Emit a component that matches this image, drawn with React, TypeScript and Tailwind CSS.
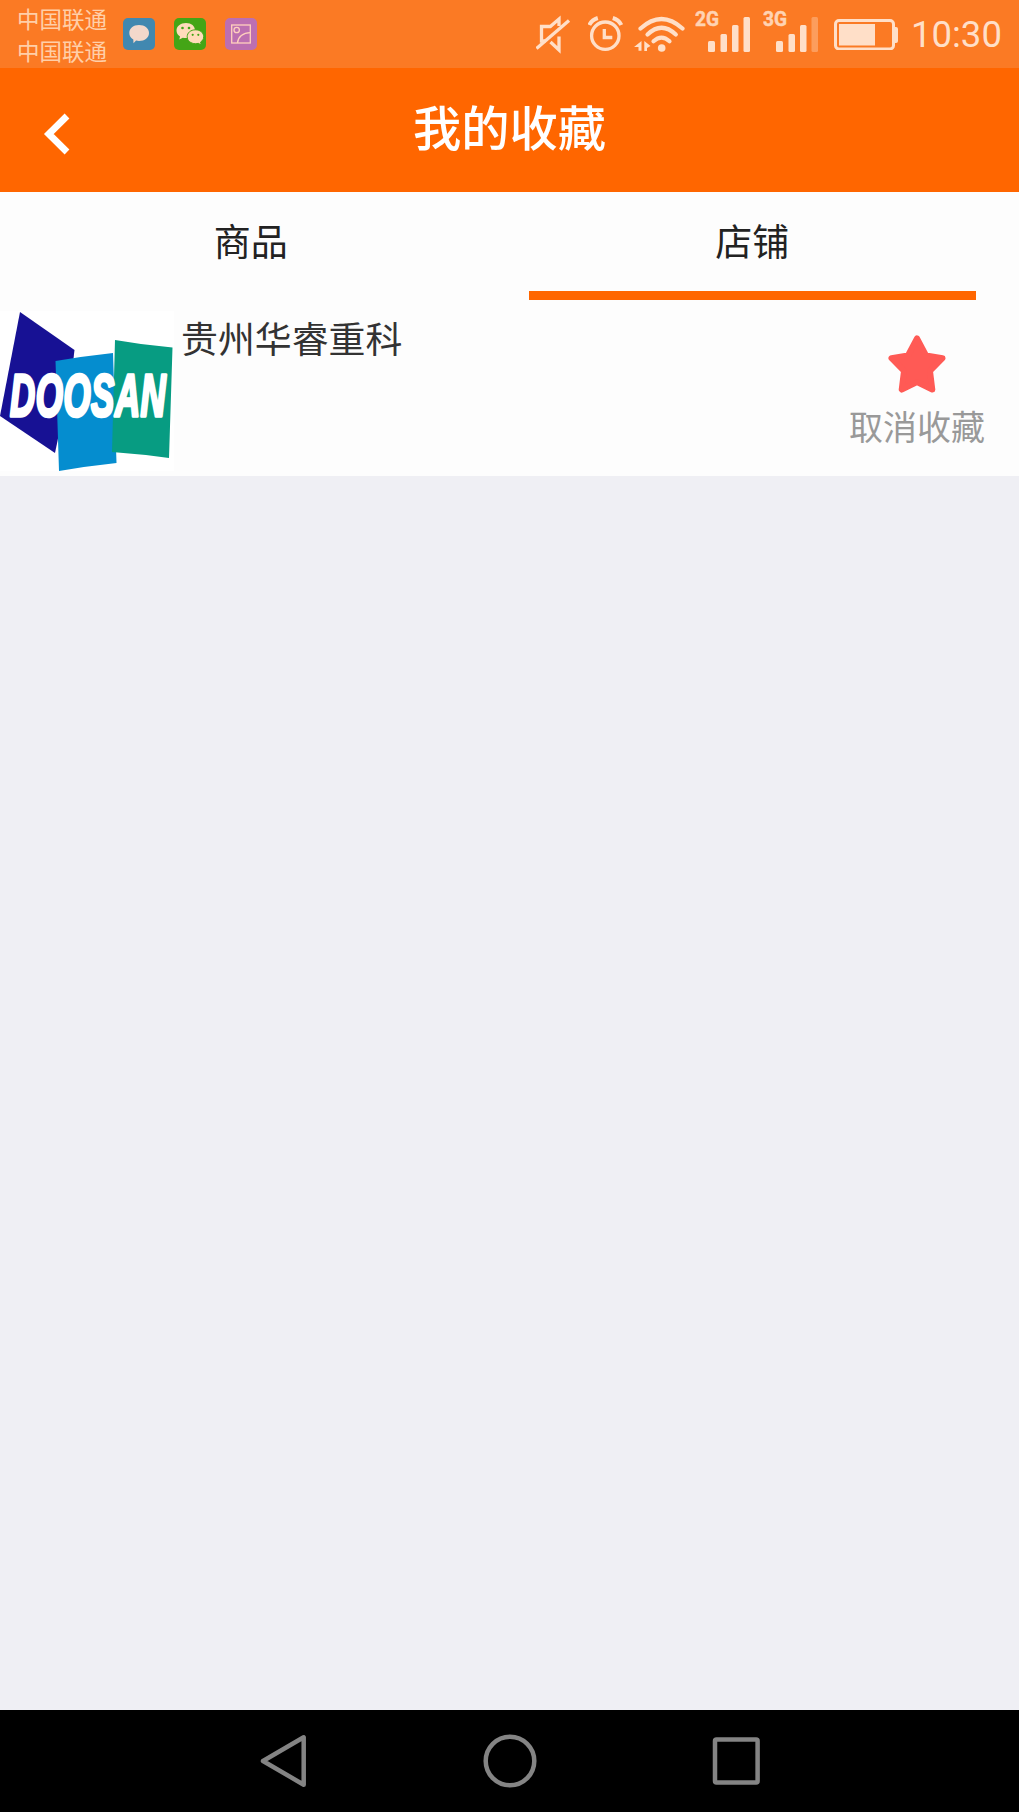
import type { ReactNode } from "react";

const CJK = "font-['Noto_Sans_CJK_SC',sans-serif]";

function AppBadge({ color, children }: { color: string; children: ReactNode }) {
  return (
    <svg className="size-8 shrink-0" viewBox="0 0 32 32">
      <rect width="32" height="32" rx="5" fill={color} />
      {children}
    </svg>
  );
}

function Signal({ label, weak }: { label: string; weak?: boolean }) {
  return (
    <svg className="h-[56px] w-[56px] shrink-0" viewBox="0 -4 56 56" fill="#ffdfc8">
      <text x="0" y="15.500" fontFamily="Roboto, sans-serif" fontWeight="700" fontSize="19.5" textLength="24" lengthAdjust="spacingAndGlyphs" fill="#ffd3b3" stroke="#ffd3b3" strokeWidth=".5">
        {label}
      </text>
      <rect x="13" y="31" width="7" height="11" rx="1.5" />
      <rect x="25.5" y="24" width="6.5" height="18" rx="1.5" />
      <rect x="37" y="15" width="6.5" height="27" rx="1.5" />
      <rect x="48.5" y="7" width="6.5" height="35" rx="1.5" opacity={weak ? 0.35 : 1} />
    </svg>
  );
}

function StatusBar() {
  return (
    <div className="flex h-[68px] shrink-0 items-center bg-[#fb7a24] text-[#ffcfa8]">
      <div className={`${CJK} ml-[17px] w-[106px] text-[22.5px] leading-8`}>
        <div>中国联通</div>
        <div>中国联通</div>
      </div>
      <div className="flex gap-[19px]">
        <AppBadge color="#4188b0">
          <path d="M16 7c5.800 0 10 3.400 10 8s-4.200 8-10 8c-1 0-2-.1-2.900-.4L10.500 25.300 10.300 21.500C7.800 20 6.300 17.700 6.300 15c0-4.600 4-8 9.700-8z" fill="#f3d8cb" />
        </AppBadge>
        <AppBadge color="#44a516">
          <path d="M12 5C6.500 5 2.500 8.300 2.500 12.500c0 2.500 1.300 4.500 3.500 6L5.300 21.500l3.500-1.800c1 .3 2 .4 3.200.4C17.500 20.100 21 17 21 12.500S17.500 5 12 5z" fill="#ffdcba" />
          <path d="M21.500 11.800c-4.900 0-8.300 3-8.300 6.900s3.500 7 8.300 7c1 0 1.900-.1 2.700-.4l3 1.600-.6-2.800c1.900-1.300 3.100-3.100 3.100-5.400 0-3.900-3.400-6.900-8.200-6.900z" fill="#ffdcba" stroke="#44a516" strokeWidth="1" />
          <g fill="#44a516">
            <circle cx="8.500" cy="10" r="1.300" />
            <circle cx="15" cy="10" r="1.300" />
            <circle cx="18.700" cy="16.800" r="1.100" />
            <circle cx="24.300" cy="16.800" r="1.100" />
          </g>
        </AppBadge>
        <AppBadge color="#bc6fb1">
          <g fill="none" stroke="#ffd0bd" strokeWidth="1.300">
            <rect x="6.700" y="7" width="18.600" height="18" />
            <circle cx="11.700" cy="12" r="2.700" />
            <path d="M12.500 25c.5-6 5.500-10.300 12.800-10.300" />
          </g>
        </AppBadge>
      </div>

      <svg className="ml-[279px] h-[40px] w-[36px] shrink-0" viewBox="0 0 36 40" fill="none" stroke="#ffdfc8" strokeWidth="3.300">
        <path d="M9.500 27H5.500V12.500h8.800L23 5V12M23 22.500v13.500l-8.500-8" />
        <path d="M.500 34.500L33 6.500" />
      </svg>
      <svg className="ml-[16px] h-[40px] w-[35px] shrink-0" viewBox="0 0 35 40" fill="none" stroke="#ffdfc8" strokeWidth="3.300">
        <circle cx="17.300" cy="21.700" r="13.700" />
        <path d="M16.300 15v8.500h8" />
        <path d="M1.300 11c1.500-3.200 4.500-5.800 8.500-7M33.300 11c-1.500-3.200-4.500-5.800-8.500-7" strokeWidth="4" />
      </svg>
      <svg className="ml-[11px] h-[40px] w-[52px] shrink-0" viewBox="0 0 52 40" fill="none" stroke="#ffdfc8" strokeWidth="4.200" strokeLinecap="round">
        <path d="M6.500 14.500Q27.500-4.500 48.500 14.500" />
        <path d="M13.500 20.500Q27.500 7 41.800 20.500" />
        <path d="M19.500 27.300Q27.500 20 35.500 27.300" />
        <circle cx="27.700" cy="34" r="3.800" fill="#ffdfc8" stroke="none" />
        <path d="M7.500 27v9.800H4.500V33H0zM10.300 37V27L16.500 32 13 34V37z" fill="#ffdfc8" stroke="none" />
      </svg>
      <div className="ml-[9px] flex gap-3">
        <Signal label="2G" />
        <Signal label="3G" weak />
      </div>
      <svg className="ml-[15px] h-[32px] w-[64px] shrink-0" viewBox="0 0 64 32">
        <rect x="1.500" y="4" width="58" height="28.500" rx="3.500" transform="translate(0 -1.500)" fill="none" stroke="#ffdfc8" strokeWidth="3" />
        <rect x="5" y="6" width="36" height="21.500" fill="#ffdfc8" />
        <path d="M60 9h2q2 0 2 2v12q0 2-2 2h-2z" fill="#ffdfc8" />
      </svg>
      <div className="ml-[13px] whitespace-nowrap pt-[3px] font-[Roboto] text-[36.500px] leading-none text-[#ffdfc8]">10:30</div>
    </div>
  );
}

function Header() {
  return (
    <header className="grid h-[124px] shrink-0 grid-cols-[120px_1fr_120px] items-center bg-[#ff6600]">
      <svg className="ml-[42px] mt-[7px] h-[44px] w-[30px]" viewBox="0 0 30 44" fill="none" stroke="#fff" strokeWidth="6.800" strokeLinejoin="miter">
        <path d="M25 4L6.800 22 25 40" />
      </svg>
      <h1 className={`${CJK} -mt-[11px] text-center text-[48.300px] font-medium leading-[60px] text-white`}>我的收藏</h1>
    </header>
  );
}

function Tab({ label, active }: { label: string; active?: boolean }) {
  return (
    <button className="flex w-[501.5px] flex-col items-center">
      <span className={`${CJK} mt-[23px] h-[50px] text-[37px] leading-[50px] text-[#222]`}>{label}</span>
      <span className={active ? "mt-[26px] h-[9px] w-[447px] bg-[#ff6600]" : "hidden"} />
    </button>
  );
}

function ShopLogo() {
  return (
    <svg className="h-[160px] w-[174px] shrink-0" viewBox="0 0 174 160">
      <rect width="174" height="160" fill="#fff" />
      <path d="M20 1L74.500 39 72 60 55 142 0 105z" fill="#171194" />
      <path d="M55.500 50Q85 45 113 42L116.500 152Q88 155 59 160z" fill="#058dcf" />
      <path d="M115 29Q143 34 172.500 36.500L169 147Q140 143 112 141z" fill="#079c82" />
      <text
        transform="translate(10 104.500) scale(.59 1)"
        fontFamily="'Liberation Sans', sans-serif"
        fontWeight="700"
        fontStyle="italic"
        fontSize="59"
        textLength="264"
        fill="#fff"
        stroke="#fff"
        strokeWidth="3.5"
        strokeLinejoin="round"
      >
        DOOSAN
      </text>
    </svg>
  );
}

function ShopRow() {
  return (
    <div className="flex h-[165px] shrink-0 bg-[#fdfdfd]">
      <ShopLogo />
      <div className={`${CJK} ml-[7px] mt-[1px] flex-1 text-[36.900px] leading-[50px] text-[#333]`}>贵州华睿重科</div>
      <button className="mr-[34px] flex flex-col items-center">
        <svg className="mt-[24px] h-[59px] w-[58px]" viewBox="0 0 58 59">
          <path
            d="M29 3.500L38 20.500 54.500 23.200 42 36 44.300 54.500 29 47 13.700 54.500 16 36 3.500 23.200 20 20.500z"
            fill="#ff5a55"
            stroke="#ff5a55"
            strokeWidth="6"
            strokeLinejoin="round"
          />
        </svg>
        <span className={`${CJK} mt-[8px] text-[34px] leading-[48px] text-[#999]`}>取消收藏</span>
      </button>
    </div>
  );
}

function NavBar() {
  return (
    <nav className="flex h-[102px] shrink-0 items-center justify-center gap-[170px] bg-black">
      <svg className="h-[56px] w-[56px]" viewBox="0 0 56 56" fill="none" stroke="#848484" strokeWidth="4.500" strokeLinejoin="round">
        <path d="M47.700 4.300V51.700L7 28z" />
      </svg>
      <svg className="h-[56px] w-[56px]" viewBox="0 0 56 56" fill="none" stroke="#848484" strokeWidth="4.500">
        <circle cx="28" cy="28" r="24.300" />
      </svg>
      <svg className="h-[56px] w-[56px]" viewBox="0 0 56 56" fill="none" stroke="#848484" strokeWidth="4.500">
        <rect x="7" y="6.500" width="42.600" height="43" rx="1.500" />
      </svg>
    </nav>
  );
}

export default function App() {
  return (
    <div className="flex h-[1812px] w-[1019px] flex-col overflow-hidden bg-[#efeff4]">
      <StatusBar />
      <Header />
      <div className="flex h-[119px] shrink-0 items-start bg-[#fdfdfd]">
        <Tab label="商品" />
        <Tab label="店铺" active />
      </div>
      <ShopRow />
      <main className="flex-1" />
      <NavBar />
    </div>
  );
}
